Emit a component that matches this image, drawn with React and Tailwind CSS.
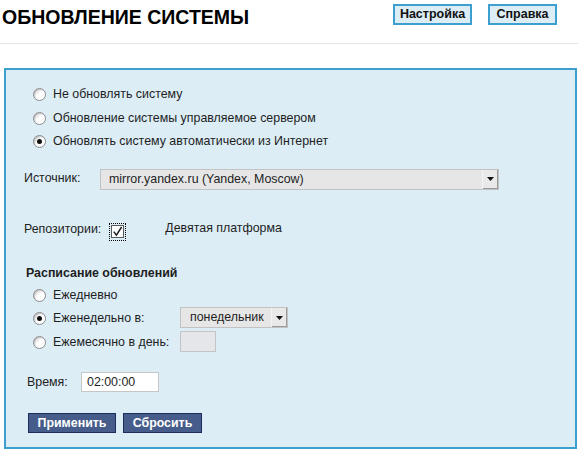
import React from "react";

function Radio({ checked }) {
  return (
    <span className="relative inline-flex h-[13px] w-[13px] shrink-0 items-center justify-center rounded-full border border-[#8a8a8a] bg-gradient-to-br from-[#d8d8d8] via-white to-white shadow-[inset_1px_1px_1px_rgba(0,0,0,0.15)]">
      {checked && <span className="h-[5px] w-[5px] rounded-full bg-[#111]" />}
    </span>
  );
}

function RadioRow({ checked, label, children }) {
  return (
    <div className="flex h-[23.5px] items-center">
      <div className="ml-[27px] flex items-center">
        <Radio checked={checked} />
      </div>
      <span className="ml-[7px]">{label}</span>
      {children}
    </div>
  );
}

function Arrow() {
  return (
    <span className="flex h-full w-[16px] items-center justify-center border-l border-[#f4f4f4] bg-[#e9e9e9] shadow-[inset_-1px_-1px_0_#9a9a9a]">
      <svg width="7" height="4" viewBox="0 0 7 4">
        <path d="M0 0 H7 L3.5 4 Z" fill="#111" />
      </svg>
    </span>
  );
}

export default function App() {
  return (
    <div className="h-[451px] w-[578px] overflow-hidden bg-white font-['Liberation_Sans',Arial,sans-serif] text-[12.4px] text-[#1e1e1e]">
      <div className="flex h-[44px] items-start border-b border-[#e6e6e6]">
        <h1 className="ml-[2px] mt-[4px] text-[19.5px] font-bold leading-[26px] text-black">ОБНОВЛЕНИЕ СИСТЕМЫ</h1>
        <div className="ml-auto mr-[21px] mt-[4px] flex gap-[16px]">
          <button className="h-[21px] w-[79px] border-2 border-[#3c9fd0] bg-[#dcedf5] text-[12.5px] font-bold leading-none text-[#111]">Настройка</button>
          <button className="h-[21px] w-[69px] border-2 border-[#3c9fd0] bg-[#dcedf5] text-[12.5px] font-bold leading-none text-[#111]">Справка</button>
        </div>
      </div>

      <div className="ml-[4px] mt-[24px] h-[381px] w-[573px] border-2 border-[#3c9fd0] bg-[#dcedf6]">
        <div className="pt-[13px]">
          <RadioRow label="Не обновлять систему" />
          <RadioRow label="Обновление системы управляемое сервером" />
          <RadioRow checked label="Обновлять систему автоматически из Интернет" />
        </div>

        <div className="mt-[15px] flex items-start">
          <span className="ml-[18px] w-[76px] leading-[18px]">Источник:</span>
          <div className="flex h-[21px] w-[399px] items-stretch border border-[#c2c2c2] bg-[#e6e6e6]">
            <span className="flex-1 pl-[8px] leading-[19px]">mirror.yandex.ru (Yandex, Moscow)</span>
            <Arrow />
          </div>
        </div>

        <div className="mt-[31px] flex items-start">
          <span className="ml-[18px] leading-[16px]">Репозитории:</span>
          <span className="ml-[8px] mt-[2px] flex h-[18px] w-[17px] items-center justify-center border border-dotted border-black">
            <span className="flex h-[13px] w-[13px] items-center justify-center border border-[#5a5a5a] bg-white">
              <svg width="11" height="11" viewBox="0 0 11 11">
                <path d="M1.8 5.6 L4.4 9.2 L9.6 1" fill="none" stroke="#222" strokeWidth="1.5" />
              </svg>
            </span>
          </span>
          <span className="ml-[39px] leading-[14px]">Девятая платформа</span>
        </div>

        <div className="ml-[20px] mt-[24px] font-bold leading-[16px]">Расписание обновлений</div>
        <div className="mt-[3px]">
          <RadioRow label="Ежедневно" />
          <RadioRow checked label={<span className="inline-block w-[127px]">Еженедельно в:</span>}>
            <div className="-mt-[2px] flex h-[21px] w-[108px] items-stretch border border-[#c2c2c2] bg-[#e6e6e6]">
              <span className="flex-1 pl-[9px] leading-[19px]">понедельник</span>
              <Arrow />
            </div>
          </RadioRow>
          <RadioRow label={<span className="inline-block w-[127px]">Ежемесячно в день:</span>}>
            <div className="-mt-[2px] h-[21px] w-[36px] border border-[#c4c4c4] bg-[#e4e6ea]" />
          </RadioRow>
        </div>

        <div className="mt-[18px] flex items-center">
          <span className="ml-[21px] w-[54px]">Время:</span>
          <div className="h-[20px] w-[78px] border border-[#c6c6c6] bg-white pl-[5px] leading-[18px]">02:00:00</div>
        </div>

        <div className="ml-[22px] mt-[21px] flex gap-[7px]">
          <button className="h-[20px] w-[88px] border border-[#1c2c5c] bg-[#465c8a] text-[12.4px] font-bold leading-none text-white">Применить</button>
          <button className="h-[20px] w-[79px] border border-[#1c2c5c] bg-[#465c8a] text-[12.4px] font-bold leading-none text-white">Сбросить</button>
        </div>
      </div>
    </div>
  );
}
